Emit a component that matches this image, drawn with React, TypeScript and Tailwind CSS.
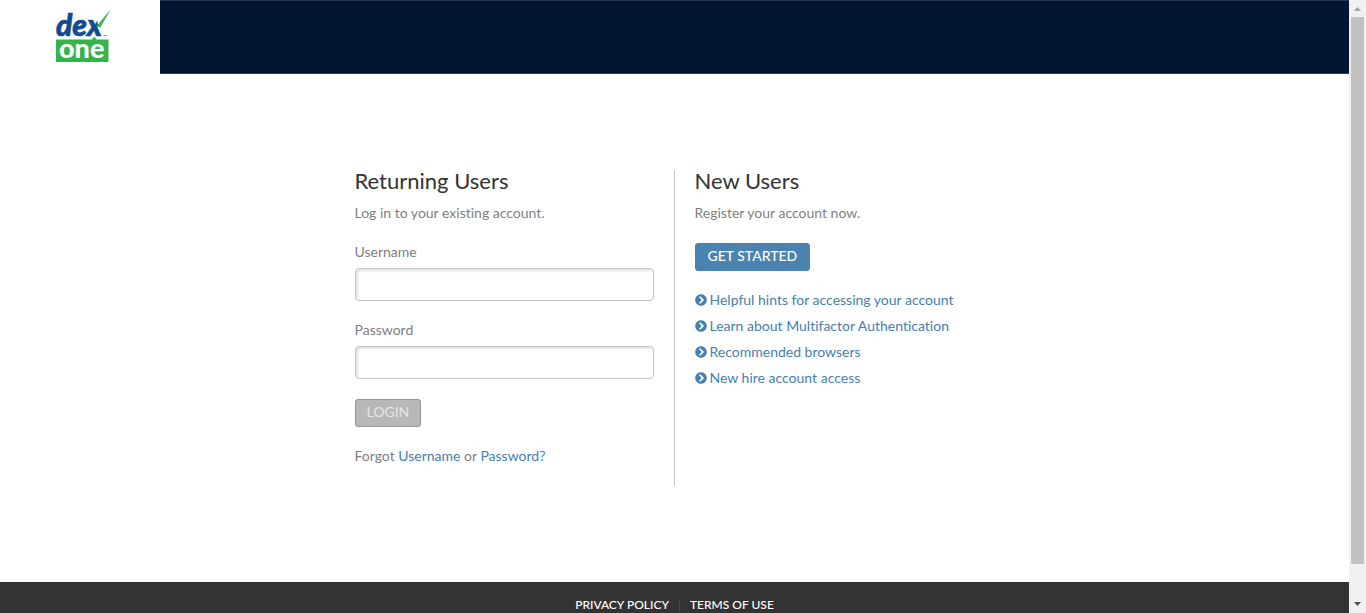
import type { ReactNode } from "react";
import { FaChevronCircleRight } from "react-icons/fa";

const hints = [
  "Helpful hints for accessing your account",
  "Learn about Multifactor Authentication",
  "Recommended browsers",
  "New hire account access",
];

function Logo() {
  return (
    <svg width="56" height="54" viewBox="0 0 56 54" role="img" aria-label="dex one" className="overflow-visible">
      <text x="0" y="27" fontFamily="Lato, sans-serif" fontSize="30" fontWeight="900" fontStyle="italic" fill="#114b91" stroke="#114b91" strokeWidth="0.7">
        dex
      </text>
      <path d="M41 9 L50 3 L54 8 L45.500 18 L42 17 Z" fill="#fff" />
      <path d="M40 18 L44 13 L55 0 L44.500 18 Z" fill="#35b44a" />
      <path d="M47.500 26h3v1h-3z" fill="#7d9cc4" />
      <path d="M0 30.500h36l2.200-3 2.300 3h12V53H0z" fill="#35b44a" />
      <text x="3" y="49" fontFamily="Lato, sans-serif" fontSize="27" fontWeight="900" fill="#fff">
        one
      </text>
    </svg>
  );
}

function Field({ id, type, children }: { id: string; type: string; children: ReactNode }) {
  return (
    <div className="mb-[19px]">
      <label htmlFor={id} className="block pb-1.5 leading-5">
        {children}
      </label>
      <input
        id={id}
        type={type}
        className="block h-[33px] w-full rounded-sm border border-[#c4c4c4] bg-white px-2 shadow-[inset_2px_2px_3px_#e2e2e2] outline-none"
      />
    </div>
  );
}

function Scrollbar() {
  return (
    <div aria-hidden="true" className="flex w-[17px] shrink-0 flex-col items-center bg-[#f1f1f1]">
      <svg width="17" height="17" viewBox="0 0 17 17" className="shrink-0">
        <path d="M5 11h7L8.500 7z" fill="#a3a3a3" />
      </svg>
      <div className="w-[13px] flex-1 bg-[#c1c1c1]" />
      <div className="h-8 shrink-0" />
      <svg width="17" height="17" viewBox="0 0 17 17" className="shrink-0">
        <path d="M5 6h7l-3.500 4z" fill="#505050" />
      </svg>
    </div>
  );
}

export default function App() {
  return (
    <div className="flex h-screen overflow-hidden bg-white font-['Lato',sans-serif] text-sm text-[#7f7f7f] [font-variant-ligatures:none]">
      <div className="flex min-w-0 flex-1 flex-col">
        <header className="flex h-[74px] shrink-0">
          <div className="w-40 pt-[9px] pl-14">
            <Logo />
          </div>
          <div className="flex-1 border-y border-[#213a55] bg-[#00172f]" />
        </header>

        <main className="flex flex-1 justify-center pt-24">
          <div className="flex w-[640px] items-start">
            <form className="h-[316px] w-1/2 border-r border-[#c8c8c8] pr-5">
              <h1 className="text-[22px] leading-[22px] text-[#333]">Returning Users</h1>
              <p className="mt-[11px] mb-[19px] leading-5">Log in to your existing account.</p>
              <Field id="username" type="text">Username</Field>
              <Field id="password" type="password">Password</Field>
              <button
                type="submit"
                disabled
                className="mt-5 block h-7 rounded-[3px] border border-[#969696] bg-[#b8b8b8] px-[11px] pb-0.5 text-[#e6e6e6]"
              >
                LOGIN
              </button>
              <p className="mt-[19px] leading-5">
                Forgot <a href="#username" className="text-[#4680b1]">Username</a> or{" "}
                <a href="#password" className="text-[#4680b1]">Password?</a>
              </p>
            </form>
            <section className="w-1/2 pl-5">
              <h2 className="text-[22px] leading-[22px] text-[#333]">New Users</h2>
              <p className="mt-[11px] mb-5 leading-5">Register your account now.</p>
              <button type="button" className="block h-7 rounded-[3px] border border-[#4a82b0] bg-[#4a82b0] px-3 pb-0.5 font-medium text-white">
                GET STARTED
              </button>
              <ul className="mt-4">
                {hints.map((hint) => (
                  <li key={hint}>
                    <a href="#hints" className="flex h-[26px] items-center gap-[3px] text-[#4680b1]">
                      <FaChevronCircleRight className="size-3" />
                      {hint}
                    </a>
                  </li>
                ))}
              </ul>
            </section>
          </div>
        </main>

        <footer className="flex h-[31px] shrink-0 items-start justify-center bg-[#333] pt-[15px] text-xs leading-4 font-medium text-white">
          <a href="#privacy">PRIVACY POLICY</a>
          <span className="mx-2.5 mt-1 h-2.5 w-px bg-[#3b4c6b]" />
          <a href="#terms">TERMS OF USE</a>
        </footer>
      </div>
      <Scrollbar />
    </div>
  );
}
